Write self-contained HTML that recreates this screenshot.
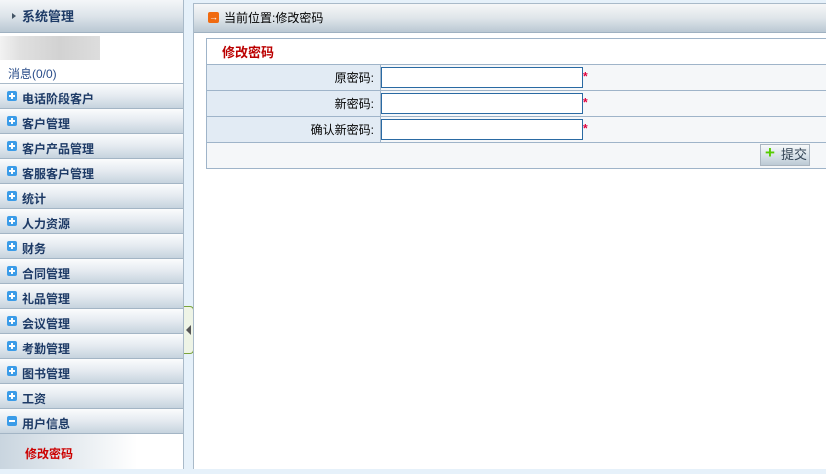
<!DOCTYPE html><html><head><meta charset="utf-8"><style>
*{margin:0;padding:0;box-sizing:border-box}
body{width:826px;height:469px;overflow:hidden;background:#e6f1fa;font-family:"Liberation Sans","Noto Sans CJK SC",sans-serif;font-size:12px;position:relative}
#side{position:absolute;left:0;top:0;width:184px;height:469px;background:#fff;border-right:1px solid #a9bac9}
.hd{height:33px;background:linear-gradient(#f4f6f8,#dde4ea 50%,#b9c7d3);border-bottom:1px solid #9fb1c1;color:#1d3a66;font-weight:bold;font-size:13px;line-height:34px;padding-left:22px;position:relative}
.hd:before{content:"";position:absolute;left:12px;top:13px;border-left:4px solid #456;border-top:3px solid transparent;border-bottom:3px solid transparent}
.blur{position:absolute;top:36px;left:0;width:100px;height:24px;background:linear-gradient(90deg,#f2f2f2,#e0e0e0 20%,#d2d2d2 60%,#ddd)}
.msg{position:absolute;top:65px;left:8px;color:#2a4d8a;font-size:12px}
.sep{position:absolute;top:83px;left:0;width:183px;border-top:1px solid #a9bac9}
.menu{position:absolute;top:84px;left:0;width:183px}
.it{height:25px;background:linear-gradient(#fbfcfd,#e4eaf0 50%,#c6d3de);border-bottom:1px solid #a3b5c5;color:#1d3a66;font-weight:bold;font-size:12px;line-height:30px;padding-left:22px;position:relative}
.it i{position:absolute;left:7px;top:7px;width:10px;height:10px;background:#3b9ce8;border-radius:2px}
.it i:before{content:"";position:absolute;left:2px;top:4px;width:6px;height:2px;background:#fff}
.it i.p:after{content:"";position:absolute;left:4px;top:2px;width:2px;height:6px;background:#fff}
.sub{height:35px;background:linear-gradient(90deg,#c9d5df,#fff 75%);color:#c00;font-weight:bold;line-height:40px;padding-left:25px}
#grip{position:absolute;left:184px;top:306px;width:10px;height:48px;border:1px solid #7aa33a;border-left:none;border-radius:0 4px 4px 0;background:#eef4e6}
#grip:after{content:"";position:absolute;left:2px;top:18px;border-right:5px solid #555;border-top:5px solid transparent;border-bottom:5px solid transparent}
#main{position:absolute;left:193px;top:3px;width:633px;height:466px;background:#fff;border-left:1px solid #a9bac9;border-top:1px solid #a9bac9}
.mh{height:29px;background:linear-gradient(#f6f7f8,#dfe5ea 50%,#bac8d3);border-bottom:1px solid #9fb1c1;line-height:28px;padding-left:30px;font-size:12px;color:#000;position:relative}
.mh b{position:absolute;left:14px;top:8px;width:11px;height:11px;background:#f06a10;border-radius:2px;color:#fff;font-size:9px;line-height:11px;text-align:center}
table{position:absolute;left:12px;top:34px;width:640px;border-collapse:collapse;background:#f5f7f9}
td{border:1px solid #9fb4c9;height:26px}
.t{background:#fff;color:#b00;font-weight:bold;font-size:13px;padding-left:15px}
.l{width:174px;background:#e2ebf4;text-align:right;padding-right:6px}
input{width:202px;height:21px;border:1px solid #2a6aa3;margin-left:0;vertical-align:middle}
.s{color:#e0003c;font-weight:bold}
.btn{position:absolute;left:566px;top:140px;width:50px;height:22px;border:1px solid #aab5c0;background:linear-gradient(#f7f9fa,#d4dee6 60%,#bccad5);color:#345;font-size:13px;line-height:20px;padding-left:20px}
.btn:before{content:"+";position:absolute;left:4px;top:-2px;color:#5c0;font-weight:bold;font-size:17px}
</style></head><body>
<div id="side">
<div class="hd">系统管理</div>
<div class="blur"></div>
<div class="msg">消息(0/0)</div>
<div class="sep"></div>
<div class="menu">
<div class="it"><i class="p"></i>电话阶段客户</div>
<div class="it"><i class="p"></i>客户管理</div>
<div class="it"><i class="p"></i>客户产品管理</div>
<div class="it"><i class="p"></i>客服客户管理</div>
<div class="it"><i class="p"></i>统计</div>
<div class="it"><i class="p"></i>人力资源</div>
<div class="it"><i class="p"></i>财务</div>
<div class="it"><i class="p"></i>合同管理</div>
<div class="it"><i class="p"></i>礼品管理</div>
<div class="it"><i class="p"></i>会议管理</div>
<div class="it"><i class="p"></i>考勤管理</div>
<div class="it"><i class="p"></i>图书管理</div>
<div class="it"><i class="p"></i>工资</div>
<div class="it"><i></i>用户信息</div>
<div class="sub">修改密码</div>
</div>
</div>
<div id="grip"></div>
<div id="main">
<div class="mh"><b>→</b>当前位置:修改密码</div>
<table>
<tr><td colspan="2" class="t">修改密码</td></tr>
<tr><td class="l">原密码:</td><td><input><span class="s">*</span></td></tr>
<tr><td class="l">新密码:</td><td><input><span class="s">*</span></td></tr>
<tr><td class="l">确认新密码:</td><td><input><span class="s">*</span></td></tr>
<tr><td colspan="2"></td></tr>
</table>
<div class="btn">提交</div>
</div>
</body></html>
